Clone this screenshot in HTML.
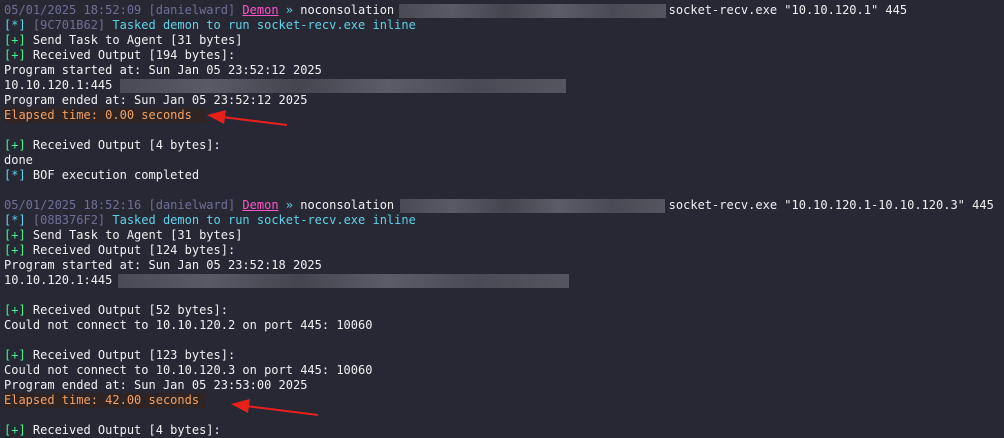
<!DOCTYPE html>
<html><head><meta charset="utf-8"><style>
html,body{margin:0;padding:0;background:#282835;width:1004px;height:438px;overflow:hidden}
#t{position:absolute;left:4px;top:3px;font:12px/15px "DejaVu Sans Mono","Liberation Mono",monospace;color:#f0f0f0;white-space:pre}
.m{color:#6e6f97}.p{color:#ff55c8;text-decoration:underline}.c{color:#5fd1e6}.g{color:#3ff28a}.o{color:#f2a064}
.hl{background:#2f2424;display:inline-block;width:201px}
.b{position:absolute;height:14px;background:linear-gradient(90deg,#4a4a55,#5a5a66 20%,#45454f 40%,#5c5c68 60%,#4a4a55 80%,#55555f)}
</style></head><body>
<div id="t"><span class="m">05/01/2025 18:52:09 [danielward] </span><span class="p">Demon</span><span class="c"> »</span> noconsolation                                      socket-recv.exe "10.10.120.1" 445
<span class="c">[*] </span><span class="m">[9C701B62]</span><span class="c"> Tasked demon to run socket-recv.exe inline</span>
<span class="g">[+]</span> Send Task to Agent [31 bytes]
<span class="g">[+]</span> Received Output [194 bytes]:
Program started at: Sun Jan 05 23:52:12 2025
10.10.120.1:445
Program ended at: Sun Jan 05 23:52:12 2025
<span class="o hl">Elapsed time: 0.00 seconds</span>

<span class="g">[+]</span> Received Output [4 bytes]:
done
<span class="c">[*]</span> BOF execution completed

<span class="m">05/01/2025 18:52:16 [danielward] </span><span class="p">Demon</span><span class="c"> »</span> noconsolation                                      socket-recv.exe "10.10.120.1-10.10.120.3" 445
<span class="c">[*] </span><span class="m">[08B376F2]</span><span class="c"> Tasked demon to run socket-recv.exe inline</span>
<span class="g">[+]</span> Send Task to Agent [31 bytes]
<span class="g">[+]</span> Received Output [124 bytes]:
Program started at: Sun Jan 05 23:52:18 2025
10.10.120.1:445

<span class="g">[+]</span> Received Output [52 bytes]:
Could not connect to 10.10.120.2 on port 445: 10060

<span class="g">[+]</span> Received Output [123 bytes]:
Could not connect to 10.10.120.3 on port 445: 10060
Program ended at: Sun Jan 05 23:53:00 2025
<span class="o hl">Elapsed time: 42.00 seconds</span>

<span class="g">[+]</span> Received Output [4 bytes]:</div>
<div class="b" style="left:399px;top:4px;width:267px"></div>
<div class="b" style="left:120px;top:79px;width:446px"></div>
<div class="b" style="left:400px;top:199px;width:265px"></div>
<div class="b" style="left:118px;top:274px;width:451px"></div>
<svg style="position:absolute;left:0;top:0" width="1004" height="438">
<line x1="287" y1="125" x2="222" y2="117" stroke="#e8201c" stroke-width="2"/>
<polygon points="207,115 226,110 224,124" fill="#e8201c"/>
<line x1="318" y1="415" x2="246" y2="406" stroke="#e8201c" stroke-width="2"/>
<polygon points="231,404 250,399 248,413" fill="#e8201c"/>
</svg>
</body></html>
